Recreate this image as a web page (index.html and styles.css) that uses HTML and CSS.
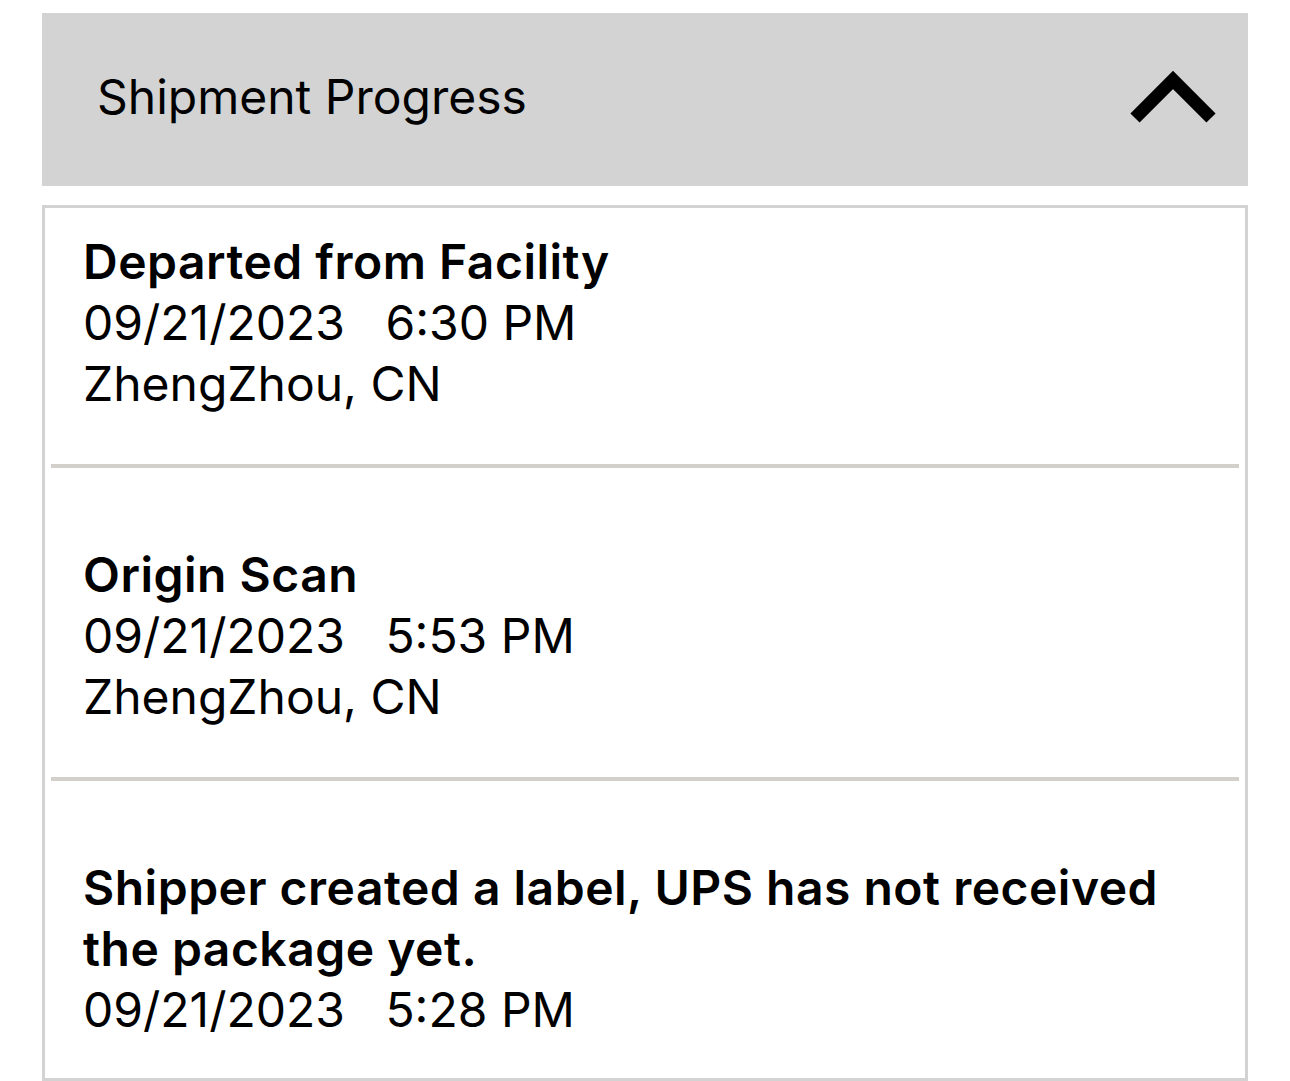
FILE: index.html
```html
<!DOCTYPE html>
<html lang="en">
<head>
<meta charset="utf-8">
<title>Shipment Progress</title>
<link rel="stylesheet" href="styles.css">
</head>
<body>
<div class="page">
  <div class="panel-header">
    <span class="panel-title">Shipment Progress</span>
    <svg class="chevron" width="90" height="56" viewBox="0 0 90 56" aria-hidden="true">
      <polyline points="5,48 43,10 81,48" fill="none" stroke="#000" stroke-width="13" stroke-linejoin="miter" stroke-linecap="butt"/>
    </svg>
  </div>
  <div class="card">
    <div class="event first">
      <div class="event-title">Departed from Facility</div>
      <div class="event-line">09/21/2023&nbsp;&nbsp;&nbsp;6:30 PM</div>
      <div class="event-line">ZhengZhou, CN</div>
    </div>
    <div class="divider"></div>
    <div class="event">
      <div class="event-title">Origin Scan</div>
      <div class="event-line">09/21/2023&nbsp;&nbsp;&nbsp;5:53 PM</div>
      <div class="event-line">ZhengZhou, CN</div>
    </div>
    <div class="divider"></div>
    <div class="event last">
      <div class="event-title">Shipper created a label, UPS has not received the package yet.</div>
      <div class="event-line">09/21/2023&nbsp;&nbsp;&nbsp;5:28 PM</div>
    </div>
  </div>
</div>
</body>
</html>
```

FILE: styles.css
```css
html, body {
  margin: 0;
  padding: 0;
  background: #ffffff;
}

body {
  font-family: Inter, "Liberation Sans", Arial, sans-serif;
  color: #000;
}

.page {
  padding: 13px 42px 0 42px;
  width: 1206px;
  display: flex;
  flex-direction: column;
  gap: 19px;
}

.panel-header {
  height: 173px;
  background: #d3d3d3;
  display: flex;
  align-items: center;
  justify-content: space-between;
  padding: 0 28px 0 55px;
  box-sizing: border-box;
}

.panel-title {
  font-size: 48px;
  font-weight: 400;
  line-height: 58px;
  margin-top: -5px;
}

.chevron {
  display: block;
  margin-top: -3px;
}

.card {
  border: 3px solid #d3d3d3;
  padding: 0 6px;
  display: flex;
  flex-direction: column;
}

.event {
  padding: 76px 0 50px 32px;
}

.event.first {
  padding-top: 23px;
}

.event.last {
  padding-bottom: 38px;
}

.event-title {
  font-size: 48px;
  font-weight: 600;
  line-height: 61px;
  letter-spacing: 0.5px;
}

.event-line {
  font-size: 48px;
  font-weight: 400;
  line-height: 61px;
}

.divider {
  height: 4px;
  background: #d3cfca;
}
```
